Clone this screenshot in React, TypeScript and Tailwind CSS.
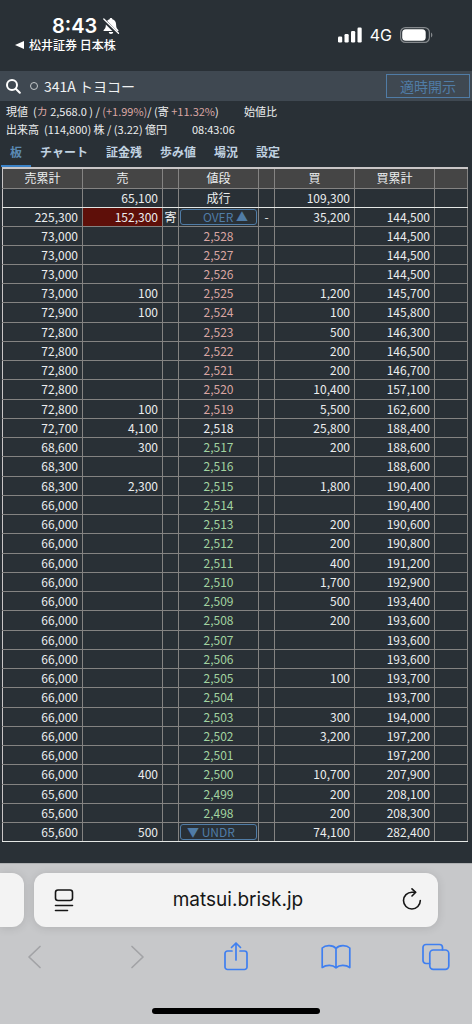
import { useState } from 'react';
import clsx from 'clsx';

type Row = {
  sellTotal: string;
  sell?: string;
  price: string;
  buy?: string;
  buyTotal: string;
};

const parse = (line: string): Row => {
  const [sellTotal, sell, price, buy, buyTotal] = line.split('|');
  return { sellTotal, sell, price, buy, buyTotal };
};

const rows: Row[] = [
  '73,000||2,528||144,500',
  '73,000||2,527||144,500',
  '73,000||2,526||144,500',
  '73,000|100|2,525|1,200|145,700',
  '72,900|100|2,524|100|145,800',
  '72,800||2,523|500|146,300',
  '72,800||2,522|200|146,500',
  '72,800||2,521|200|146,700',
  '72,800||2,520|10,400|157,100',
  '72,800|100|2,519|5,500|162,600',
  '72,700|4,100|2,518|25,800|188,400',
  '68,600|300|2,517|200|188,600',
  '68,300||2,516||188,600',
  '68,300|2,300|2,515|1,800|190,400',
  '66,000||2,514||190,400',
  '66,000||2,513|200|190,600',
  '66,000||2,512|200|190,800',
  '66,000||2,511|400|191,200',
  '66,000||2,510|1,700|192,900',
  '66,000||2,509|500|193,400',
  '66,000||2,508|200|193,600',
  '66,000||2,507||193,600',
  '66,000||2,506||193,600',
  '66,000||2,505|100|193,700',
  '66,000||2,504||193,700',
  '66,000||2,503|300|194,000',
  '66,000||2,502|3,200|197,200',
  '66,000||2,501||197,200',
  '66,000|400|2,500|10,700|207,900',
  '65,600||2,499|200|208,100',
  '65,600||2,498|200|208,300',
].map(parse);

const PREV_CLOSE = '2,518';
const tabs = ['板', 'チャート', '証金残', '歩み値', '場況', '設定'];

const cell = 'border border-[#848382] p-0 leading-[18px] first:border-l-[#c9c6c7]';
const num = cell + ' pr-1 text-right';

function StatusBar() {
  return (
    <div className="flex h-[71px] items-start justify-between pr-[39px] pl-[15px] text-white">
      <div className="pt-[15px]">
        <div className="flex items-center gap-[5px] pl-[37px]">
          <span className="font-['Inter',sans-serif] text-[20px] leading-[22px] font-semibold">8:43</span>
          <svg className="h-[18px] w-[18px]" viewBox="0 0 18 18" aria-hidden="true">
            <path d="M9 1c.9 0 1.400.6 1.400 1.300C12.900 3 14.100 5 14.100 7.500c0 3 .9 4.300 2.200 5.400.4.400.1 1.100-.5 1.100H2.200c-.6 0-.9-.7-.5-1.100C3 11.800 3.900 10.500 3.900 7.500 3.900 5 5.100 3 7.600 2.300 7.600 1.600 8.100 1 9 1zM6.800 15h4.400c0 1.200-1 2-2.200 2s-2.200-.8-2.200-2z" fill="#fff" />
            <path d="M1.500 2.800l13.500 13.500" stroke="#293036" strokeWidth="3.400" />
            <path d="M1.800 2l14.700 14.300" stroke="#fff" strokeWidth="1.300" strokeLinecap="round" />
          </svg>
        </div>
        <a href="#back" className="flex items-center gap-[5px] text-[12px] leading-4 font-medium">
          <svg className="h-2 w-[9px]" viewBox="0 0 9 8" aria-hidden="true">
            <path d="M9 0v8L0 4z" fill="#fff" />
          </svg>
          松井証券 日本株
        </a>
      </div>
      <div className="flex items-center gap-2 pt-[25px]">
        <svg className="h-4 w-6" viewBox="0 0 24 16" fill="#fff" aria-hidden="true">
          <rect x="0" y="9.500" width="4.200" height="6" rx="1.200" />
          <rect x="6.500" y="7" width="4.200" height="8.500" rx="1.200" />
          <rect x="13" y="4" width="4.200" height="11.500" rx="1.200" />
          <rect x="19.500" y="0.500" width="4.200" height="15" rx="1.200" />
        </svg>
        <span className="font-['Inter',sans-serif] text-[16px] leading-5">4G</span>
        <svg className="h-4 w-[33px]" viewBox="0 0 33 16" aria-hidden="true">
          <rect x="0.600" y="0.600" width="28.800" height="14.800" rx="4.800" fill="none" stroke="#85898d" strokeWidth="1.200" />
          <rect x="2.200" y="2.200" width="23.500" height="11.600" rx="3.500" fill="#fff" />
          <path d="M31 5.500c1.800.8 1.800 4.200 0 5z" fill="#85898d" />
        </svg>
      </div>
    </div>
  );
}

function SearchBar() {
  return (
    <div className="flex h-[30px] items-center bg-[#3f4851] pr-[2px] pl-[6px]">
      <svg className="h-[15px] w-[15px]" viewBox="0 0 15 15" fill="none" stroke="#fff" strokeWidth="2" strokeLinecap="round" aria-hidden="true">
        <circle cx="6" cy="6" r="5" />
        <path d="M9.800 9.800l4 4" />
      </svg>
      <span className="ml-[9px] h-2 w-2 rounded-full border border-[#c4c8cb]" />
      <input
        aria-label="銘柄"
        defaultValue="341A トヨコー"
        className="ml-[6px] min-w-0 flex-1 bg-transparent text-[14px] leading-5 text-[#f0f2f3] outline-none"
      />
      <button className="h-6 w-[84px] border border-[#507ca6] text-[14px] leading-5 text-[#507ca6]">適時開示</button>
    </div>
  );
}

function Summary() {
  return (
    <div className="px-[6px] pt-[1px] text-[11px] leading-[18px] text-[#eceeef]">
      <div className="flex">
        <span className="w-[27px]">現値</span>
        <span className="w-[211px]">
          (<span className="text-[#d9a5a2]">カ</span> 2,568.0 ) / <span className="text-[#d9a5a2]">(+1.99%)</span>/ (寄{' '}
          <span className="text-[#d9a5a2]">+11.32%</span>)
        </span>
        <span>始値比</span>
      </div>
      <div className="flex">
        <span className="w-[38px]">出来高</span>
        <span className="w-[148px]">(114,800) 株 / (3.22) 億円</span>
        <span>08:43:06</span>
      </div>
    </div>
  );
}

function Board() {
  return (
    <div className="pr-1 pl-[2px]">
      <table className="w-full table-fixed border-collapse border-t-2 border-[#c9c6c7] text-[12px] text-[#eceeef]">
        <colgroup>
          <col className="w-20" />
          <col className="w-20" />
          <col className="w-4" />
          <col className="w-20" />
          <col className="w-4" />
          <col className="w-20" />
          <col className="w-20" />
          <col />
        </colgroup>
        <thead>
          <tr className="h-5 bg-[#454545]">
            {['売累計', '売', '', '値段', '', '買', '買累計', ''].map((label, i) => (
              <th key={i} className={clsx(cell, 'font-normal')}>
                {label}
              </th>
            ))}
          </tr>
          <tr className="h-[19px] [&>td]:border-b-[#e4e7e5]">
            <td className={cell} />
            <td className={num}>65,100</td>
            <td className={cell} />
            <td className={clsx(cell, 'text-center')}>成行</td>
            <td className={cell} />
            <td className={num}>109,300</td>
            <td className={cell} />
            <td className={cell} />
          </tr>
        </thead>
        {/* every fourth row is one pixel taller */}
        <tbody className="[&>tr]:h-[19px] [&>tr:nth-child(4n+6)]:h-5">
          <tr>
            <td className={num}>225,300</td>
            <td className={clsx(num, 'bg-[#5e0f09]')}>152,300</td>
            <td className={clsx(cell, 'text-center')}>寄</td>
            <td className={clsx(cell, 'px-[1px]')}>
              <button className="block h-4 w-full rounded-[3px] border border-[#507ca6] pr-2 text-right leading-[13px] text-[#507ca6]">
                OVER ▲
              </button>
            </td>
            <td className={clsx(cell, 'text-center')}>-</td>
            <td className={num}>35,200</td>
            <td className={num}>144,500</td>
            <td className={cell} />
          </tr>
          {rows.map((row) => (
            <tr key={row.price}>
              <td className={num}>{row.sellTotal}</td>
              <td className={num}>{row.sell}</td>
              <td className={cell} />
              <td
                className={clsx(
                  cell,
                  'text-center',
                  row.price > PREV_CLOSE && 'text-[#d9a5a2]',
                  row.price < PREV_CLOSE && 'text-[#a2d3a0]'
                )}
              >
                {row.price}
              </td>
              <td className={cell} />
              <td className={num}>{row.buy}</td>
              <td className={num}>{row.buyTotal}</td>
              <td className={cell} />
            </tr>
          ))}
          <tr className="[&>td]:border-b-[#e4e7e5]">
            <td className={num}>65,600</td>
            <td className={num}>500</td>
            <td className={cell} />
            <td className={clsx(cell, 'px-[1px]')}>
              <button className="block h-4 w-full rounded-[3px] border border-[#507ca6] pl-[6px] text-left leading-[13px] text-[#507ca6]">
                ▼ UNDR
              </button>
            </td>
            <td className={cell} />
            <td className={num}>74,100</td>
            <td className={num}>282,400</td>
            <td className={cell} />
          </tr>
        </tbody>
      </table>
    </div>
  );
}

function BrowserBar() {
  return (
    <div className="mt-auto border-t border-[#aeb0b2] bg-[#c7c8ca] pt-[9px] pb-[10px]">
      <div className="flex gap-[10px] pr-[34px]">
        <div className="w-6 rounded-r-xl bg-[#f3f3f3] shadow-[0_1px_10px_rgba(0,0,0,0.12)]" />
        <div className="flex h-[54px] flex-1 items-center justify-between rounded-xl bg-[#f3f3f3] pr-4 pl-5 text-[#161616] shadow-[0_1px_10px_rgba(0,0,0,0.12)]">
          <button aria-label="ページメニュー">
            <svg className="h-6 w-5" viewBox="0 0 20 24" fill="none" stroke="currentColor" strokeWidth="1.600" strokeLinecap="round">
              <rect x="1.500" y="2" width="17" height="10.500" rx="2.500" />
              <path d="M1.500 17.500h17M1.500 22.500h12" />
            </svg>
          </button>
          <a href="#address" className="font-['Inter',sans-serif] text-[19px] leading-6">matsui.brisk.jp</a>
          <button aria-label="再読み込み">
            <svg className="h-6 w-5" viewBox="0 0 20 24" fill="none" stroke="currentColor" strokeWidth="1.600" strokeLinecap="round" strokeLinejoin="round">
              <path d="M18.300 12.600a8.400 8.400 0 1 1-8.400-8.400h3.500" />
              <path d="M10 0.900l3.700 3.400L10 8" />
            </svg>
          </button>
        </div>
      </div>
      <div className="flex justify-between px-5 pt-[14px] text-[#3f7ff0] [&_svg]:h-8 [&_svg]:w-8">
        <button aria-label="戻る" className="text-[#a2a3a6]">
          <svg viewBox="0 0 32 32" fill="none" stroke="currentColor" strokeWidth="1.700" strokeLinecap="round" strokeLinejoin="round">
            <path d="M20 5.500L9 16l11 10.500" />
          </svg>
        </button>
        <button aria-label="進む" className="text-[#a2a3a6]">
          <svg viewBox="0 0 32 32" fill="none" stroke="currentColor" strokeWidth="1.700" strokeLinecap="round" strokeLinejoin="round">
            <path d="M12 5.500L23 16 12 26.500" />
          </svg>
        </button>
        <button aria-label="共有">
          <svg viewBox="0 0 32 32" fill="none" stroke="currentColor" strokeWidth="1.700" strokeLinecap="round" strokeLinejoin="round">
            <path d="M12 10H7.500A2.500 2.500 0 0 0 5 12.500v13.500a2.500 2.500 0 0 0 2.500 2.500h17a2.500 2.500 0 0 0 2.500-2.500V12.500A2.500 2.500 0 0 0 24.500 10H20" />
            <path d="M16 19V2M11.500 6.500L16 2l4.500 4.500" />
          </svg>
        </button>
        <button aria-label="ブックマーク">
          <svg viewBox="0 0 32 32" fill="none" stroke="currentColor" strokeWidth="1.700" strokeLinecap="round" strokeLinejoin="round">
            <path d="M16 7.500v19.300M16 7.500C13 3.800 5.500 3.800 2.200 7v19.500c4-3 10.500-3 13.800.3 3.300-3.300 9.800-3.300 13.800-.3V7C26.500 3.800 19 3.800 16 7.500z" />
          </svg>
        </button>
        <button aria-label="タブ一覧">
          <svg viewBox="0 0 32 32" fill="none" stroke="currentColor" strokeWidth="1.700" strokeLinecap="round" strokeLinejoin="round">
            <rect x="9.800" y="9" width="19" height="19.300" rx="3.500" />
            <path d="M9.500 22.500H6A3 3 0 0 1 3 19.500V6.500a3 3 0 0 1 3-3h13.500a3 3 0 0 1 3 3v2.200" />
          </svg>
        </button>
      </div>
      <div className="mx-auto mt-[35px] h-[6px] w-[168px] rounded-full bg-black" />
    </div>
  );
}

export default function App() {
  const [active, setActive] = useState(tabs[0]);

  return (
    <div className="flex min-h-screen flex-col bg-[#293036] font-['Noto_Sans_CJK_JP',sans-serif]">
      <StatusBar />
      <SearchBar />
      <Summary />
      <nav className="flex pl-[1px] text-[12px] font-bold">
        {tabs.map((tab) => (
          <button
            key={tab}
            onClick={() => setActive(tab)}
            className={clsx(
              'h-[29px] border-b-2 px-[9px] leading-[27px]',
              tab === active ? 'border-[#3a82c8] text-[#5b8ab4]' : 'border-transparent text-[#c0d2e1]'
            )}
          >
            {tab}
          </button>
        ))}
      </nav>
      <Board />
      <BrowserBar />
    </div>
  );
}
